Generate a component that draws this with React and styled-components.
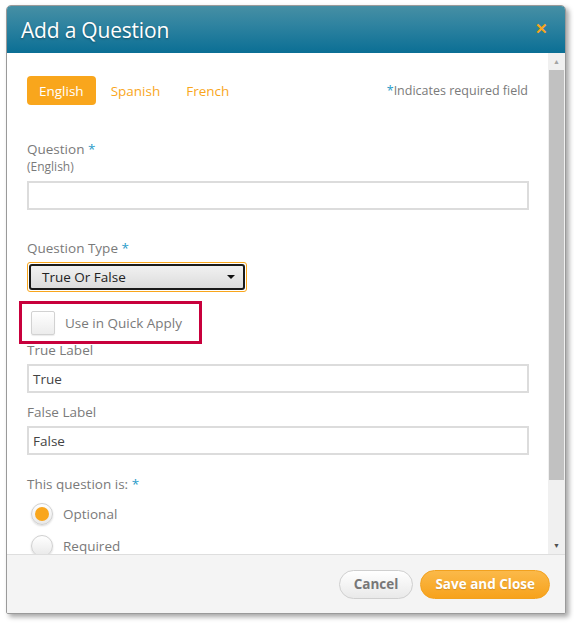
import React from 'react';
import styled, { createGlobalStyle } from 'styled-components';

const COLORS = {
  orange: '#f9a61c',
  blue: '#2b9cc9',
  label: '#7a7a7a',
  text: '#444444',
  border: '#dcdcdc',
  crimson: '#c8003c',
};

const FONT = "'Open Sans', 'Noto Sans', 'Liberation Sans', sans-serif";

const GlobalStyle = createGlobalStyle`
  html, body { margin: 0; padding: 0; background: #ffffff; }
  body { font-family: ${FONT}; }
`;

const Page = styled.div`
  width: 574px;
  height: 626px;
  padding: 5px 0 0 6px;
  box-sizing: border-box;
`;

const Dialog = styled.div`
  width: 560px;
  height: 609px;
  box-sizing: border-box;
  border: 1px solid #9a9a9a;
  border-radius: 5px 5px 2px 2px;
  box-shadow: 3px 3px 5px rgba(0, 0, 0, 0.35);
  display: flex;
  flex-direction: column;
  overflow: hidden;
  background: #fff;
`;

const Header = styled.div`
  height: 47px;
  flex: none;
  background: linear-gradient(#468fa4 0%, #2f83a0 40%, #0b6f95 100%);
  display: flex;
  align-items: center;
  justify-content: space-between;
  padding: 0 17px 0 14px;
`;

const Title = styled.h1`
  margin: 0;
  font-size: 21px;
  font-weight: 400;
  color: #fff;
  text-shadow: 0 1px 2px rgba(0, 0, 0, 0.35);
  letter-spacing: -0.2px;
`;

const CloseX = styled.span`
  color: ${COLORS.orange};
  font-size: 15px;
  font-weight: 700;
  line-height: 1;
  margin-top: -2px;
`;

const Body = styled.div`
  flex: 1;
  display: flex;
  min-height: 0;
`;

const Content = styled.div`
  flex: 1;
  overflow: hidden;
  padding: 23px 19px 0 20px;
`;

const Scrollbar = styled.div`
  width: 17px;
  flex: none;
  box-sizing: border-box;
  background: #f0f0f0;
  display: flex;
  flex-direction: column;
  align-items: center;
  padding: 0 1px;
`;

const Arrow = styled.div`
  height: 17px;
  display: flex;
  align-items: center;
  justify-content: center;
  color: ${p => (p.$dim ? '#a3a3a3' : '#505050')};
  font-size: 7px;
`;

const Thumb = styled.div`
  width: 15px;
  height: 410px;
  background: #c1c1c1;
`;

const Spacer = styled.div`
  flex: 1;
`;

const TopRow = styled.div`
  display: flex;
  align-items: center;
  justify-content: space-between;
`;

const Tabs = styled.div`
  display: flex;
  gap: 2px;
`;

const Tab = styled.span`
  height: 29px;
  padding: 0 ${p => (p.$active ? 12 : 11)}px;
  display: flex;
  align-items: center;
  border-radius: 4px;
  font-size: 13.5px;
  background: ${p => (p.$active ? COLORS.orange : 'transparent')};
  color: ${p => (p.$active ? '#fff' : COLORS.orange)};
  margin-left: ${p => (p.$first ? 0 : '2px')};
`;

const Required = styled.span`
  font-size: 12.5px;
  color: ${COLORS.label};
  margin-right: 1px;
`;

const Star = styled.span`
  color: ${COLORS.blue};
`;

const Label = styled.div`
  font-size: 13.5px;
  color: ${COLORS.label};
  line-height: 17px;
  margin-top: ${p => p.$top || 0}px;
  margin-bottom: ${p => (p.$bottom != null ? p.$bottom : 5)}px;
`;

const SubLabel = styled.div`
  font-size: 12px;
  color: ${COLORS.label};
  line-height: 15px;
  margin-top: 1px;
  margin-bottom: 7px;
`;

const Input = styled.div`
  height: 29px;
  box-sizing: border-box;
  border: 2px solid ${COLORS.border};
  display: flex;
  align-items: center;
  padding: 0 4px;
  font-size: 13.5px;
  color: ${COLORS.text};
`;

const SelectWrap = styled.div`
  width: 220px;
  height: 30px;
  box-sizing: border-box;
  border: 1px solid ${COLORS.orange};
  border-radius: 3px;
  padding: 1px;
`;

const Select = styled.div`
  height: 100%;
  box-sizing: border-box;
  border: 2px solid #1a1a1a;
  border-radius: 3px;
  background: linear-gradient(#f1f1f1, #dcdcdc);
  display: flex;
  align-items: center;
  justify-content: space-between;
  padding: 0 8px 0 11px;
  font-size: 13.5px;
  color: #222;
`;

const Caret = styled.span`
  width: 0;
  height: 0;
  border-left: 4px solid transparent;
  border-right: 4px solid transparent;
  border-top: 4px solid #111;
`;

const Highlight = styled.div`
  width: 183px;
  height: 43px;
  box-sizing: border-box;
  border: 3px solid ${COLORS.crimson};
  margin: 9px 0 -2px -8px;
  display: flex;
  align-items: center;
  padding-left: 9px;
  gap: 10px;
  position: relative;
`;

const Checkbox = styled.span`
  width: 24px;
  height: 24px;
  box-sizing: border-box;
  border: 1px solid #d2d2d2;
  border-radius: 2px;
  background: linear-gradient(#ffffff, #ececec);
  box-shadow: 0 1px 1px rgba(0, 0, 0, 0.08);
`;

const CheckText = styled.span`
  font-size: 13.5px;
  color: ${COLORS.label};
`;

const RadioRow = styled.div`
  display: flex;
  align-items: center;
  gap: 10px;
  height: 32px;
  padding-left: 4px;
`;

const Radio = styled.span`
  width: 22px;
  height: 22px;
  box-sizing: border-box;
  border-radius: 50%;
  border: 1px solid #d0d0d0;
  background: linear-gradient(#ffffff, #e8e8e8);
  box-shadow: 0 1px 2px rgba(0, 0, 0, 0.15);
  display: flex;
  align-items: center;
  justify-content: center;

  &::after {
    content: '';
    width: 14px;
    height: 14px;
    border-radius: 50%;
    background: ${p => (p.$checked ? COLORS.orange : 'transparent')};
  }
`;

const RadioText = styled.span`
  font-size: 13.5px;
  color: ${COLORS.label};
`;

const Footer = styled.div`
  height: 58px;
  flex: none;
  background: #f4f4f4;
  border-top: 1px solid #dedede;
  display: flex;
  align-items: center;
  justify-content: flex-end;
  gap: 7px;
  padding-right: 15px;
`;

const Button = styled.span`
  height: 29px;
  box-sizing: border-box;
  border-radius: 15px;
  display: flex;
  align-items: center;
  padding: 0 14px;
  font-size: 13.5px;
  font-weight: 700;
  border: 1px solid ${p => (p.$primary ? '#f2a11e' : '#cfcfcf')};
  background: ${p => (p.$primary ? 'linear-gradient(#fbb949, #f7a21c)' : 'linear-gradient(#ffffff, #e9e9e9)')};
  color: ${p => (p.$primary ? '#fff' : '#777')};
  text-shadow: ${p => (p.$primary ? '0 1px 1px rgba(0,0,0,0.15)' : 'none')};
`;

export default function App() {
  return (
    <Page>
      <GlobalStyle />
      <Dialog>
        <Header>
          <Title>Add a Question</Title>
          <CloseX>✕</CloseX>
        </Header>
        <Body>
          <Content>
            <TopRow>
              <Tabs>
                <Tab $active $first>English</Tab>
                <Tab>Spanish</Tab>
                <Tab>French</Tab>
              </Tabs>
              <Required><Star>*</Star>Indicates required field</Required>
            </TopRow>

            <Label $top={36} $bottom={0}>Question <Star>*</Star></Label>
            <SubLabel>(English)</SubLabel>
            <Input />

            <Label $top={30}>Question Type <Star>*</Star></Label>
            <SelectWrap>
              <Select>
                True Or False
                <Caret />
              </Select>
            </SelectWrap>

            <Highlight>
              <Checkbox />
              <CheckText>Use in Quick Apply</CheckText>
            </Highlight>

            <Label $top={0}>True Label</Label>
            <Input>True</Input>

            <Label $top={11}>False Label</Label>
            <Input>False</Input>

            <Label $top={21} $bottom={5}>This question is: <Star>*</Star></Label>
            <RadioRow>
              <Radio $checked />
              <RadioText>Optional</RadioText>
            </RadioRow>
            <RadioRow>
              <Radio />
              <RadioText>Required</RadioText>
            </RadioRow>
          </Content>
          <Scrollbar>
            <Arrow $dim>▲</Arrow>
            <Thumb />
            <Spacer />
            <Arrow>▼</Arrow>
          </Scrollbar>
        </Body>
        <Footer>
          <Button>Cancel</Button>
          <Button $primary>Save and Close</Button>
        </Footer>
      </Dialog>
    </Page>
  );
}
